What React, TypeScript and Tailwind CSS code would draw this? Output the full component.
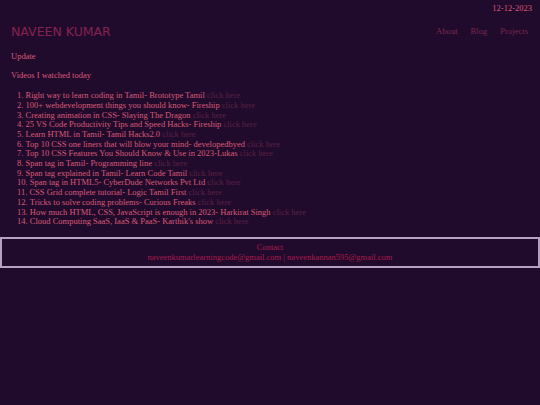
import React from "react";

const videos = [
  "Right way to learn coding in Tamil- Brototype Tamil",
  "100+ webdevelopment things you should know- Fireship",
  "Creating animation in CSS- Slaying The Dragon",
  "25 VS Code Productivity Tips and Speed Hacks- Fireship",
  "Learn HTML in Tamil- Tamil Hacks2.0",
  "Top 10 CSS one liners that will blow your mind- developedbyed",
  "Top 10 CSS Features You Should Know & Use in 2023-Lukas",
  "Span tag in Tamil- Programming line",
  "Span tag explained in Tamil- Learn Code Tamil",
  "Span tag in HTML5- CyberDude Networks Pvt Ltd",
  "CSS Grid complete tutorial- Logic Tamil First",
  "Tricks to solve coding problems- Curious Freaks",
  "How much HTML, CSS, JavaScript is enough in 2023- Harkirat Singh",
  "Cloud Computing SaaS, IaaS & PaaS- Karthik's show",
];

export default function App() {
  return (
    <div
      className="min-h-screen bg-[#210b2c] text-[8.5px] leading-[9.7px] text-[#d95a78]"
      style={{ fontFamily: '"Liberation Serif", "Times New Roman", serif' }}
    >
      <div className="flex justify-end pt-[4px] pr-[8px]">12-12-2023</div>
      <div className="mt-[11px] flex items-center justify-between pl-[11px] pr-[12px]">
        <div
          className="text-[12.5px] leading-[14px] text-[#86224f]"
          style={{ fontFamily: '"DejaVu Sans", Verdana, sans-serif' }}
        >
          NAVEEN KUMAR
        </div>
        <nav className="flex gap-[13px] text-[8.6px] text-[#76284f]">
          <span>About</span>
          <span>Blog</span>
          <span>Projects</span>
        </nav>
      </div>
      <div className="mt-[13px] pl-[11px]">Update</div>
      <div className="mt-[10px] pl-[11px]">Videos I watched today</div>
      <ol className="mt-[10px] list-inside list-decimal pl-[17px]">
        {videos.map((v) => (
          <li key={v}>
            {v} <span className="text-[#5a2046]">click here</span>
          </li>
        ))}
      </ol>
      <footer className="mt-[10px] border-2 border-[#b8a0c4] pt-[4px] pb-[4px] text-center text-[#a81a4c]">
        <div>Contact</div>
        <div>naveenkumarlearningcode@gmail.com | naveenkannan595@gmail.com</div>
      </footer>
    </div>
  );
}
